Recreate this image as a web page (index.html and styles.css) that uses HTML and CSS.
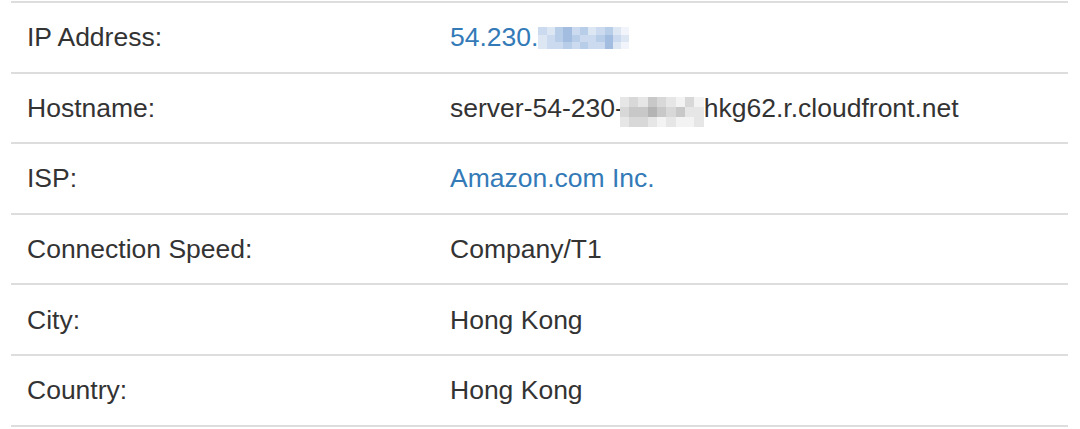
FILE: index.html
```html
<!DOCTYPE html>
<html>
<head>
<meta charset="utf-8">
<link rel="stylesheet" href="styles.css">
</head>
<body>
<div class="info-table">
  <div class="row">
    <div class="cell label">IP Address:</div>
    <div class="cell value"><a class="link" href="#">54.230.</a><span class="blur blur-blue"><i class="c2"></i><i class="c1"></i><i class="c3"></i><i class="c4"></i><i class="c2"></i><i class="c3"></i><i class="c1"></i><i class="c2"></i><i class="c3"></i><i class="c1"></i><i class="c0"></i><i class="c1"></i><i class="c2"></i><i class="c3"></i><i class="c4"></i><i class="c3"></i><i class="c2"></i><i class="c2"></i><i class="c3"></i><i class="c4"></i><i class="c2"></i><i class="c1"></i><i class="c1"></i><i class="c2"></i><i class="c2"></i><i class="c3"></i><i class="c2"></i><i class="c3"></i><i class="c2"></i><i class="c2"></i><i class="c4"></i><i class="c1"></i><i class="c0"></i></span></div>
  </div>
  <div class="row">
    <div class="cell label">Hostname:</div>
    <div class="cell value">server-54-230-<span class="blur blur-gray"><i class="g1"></i><i class="g2"></i><i class="g1"></i><i class="g3"></i><i class="g2"></i><i class="g1"></i><i class="g0"></i><i class="g2"></i><i class="g0"></i><i class="g2"></i><i class="g3"></i><i class="g3"></i><i class="g4"></i><i class="g3"></i><i class="g2"></i><i class="g3"></i><i class="g1"></i><i class="g1"></i><i class="g1"></i><i class="g2"></i><i class="g2"></i><i class="g1"></i><i class="g0"></i><i class="g1"></i><i class="g0"></i><i class="g0"></i><i class="g1"></i></span>hkg62.r.cloudfront.net</div>
  </div>
  <div class="row">
    <div class="cell label">ISP:</div>
    <div class="cell value"><a class="link" href="#">Amazon.com Inc.</a></div>
  </div>
  <div class="row">
    <div class="cell label">Connection Speed:</div>
    <div class="cell value">Company/T1</div>
  </div>
  <div class="row">
    <div class="cell label">City:</div>
    <div class="cell value">Hong Kong</div>
  </div>
  <div class="row">
    <div class="cell label">Country:</div>
    <div class="cell value">Hong Kong</div>
  </div>
</div>
</body>
</html>
```

FILE: styles.css
```css
html, body {
  margin: 0;
  padding: 0;
  background: #ffffff;
}
body {
  font-family: "Liberation Sans", Arial, Helvetica, sans-serif;
  font-size: 26.5px;
  color: #333333;
}
.info-table {
  width: 1057px;
  margin-left: 11px;
  padding-top: 1px;
  border-bottom: 2px solid #dddddd;
}
.row {
  display: grid;
  grid-template-columns: 439px 1fr;
  height: 70.6px;
  box-sizing: border-box;
  border-top: 2px solid #dddddd;
  align-items: center;
}
.cell {
  padding-left: 16px;
  white-space: nowrap;
  line-height: 30px;
}
.value {
  padding-left: 0;
  display: flex;
  align-items: center;
}
.link {
  color: #337ab7;
  text-decoration: none;
}
.blur {
  display: inline-grid;
  grid-auto-flow: row;
}
.blur i {
  display: block;
}
.blur-blue {
  width: 91px;
  height: 22px;
  grid-template-columns: repeat(11, 1fr);
  grid-template-rows: repeat(3, 1fr);
  margin-top: 2px;
}
.blur-gray {
  width: 84px;
  height: 30px;
  grid-template-columns: repeat(9, 1fr);
  grid-template-rows: repeat(3, 1fr);
  margin-top: 8px;
  margin-left: -4px;
}
.c0 { background: #f1f5fb; }
.c1 { background: #dde7f4; }
.c2 { background: #cbdaee; }
.c3 { background: #b8cde8; }
.c4 { background: #a3bde0; }
.g0 { background: #f3f3f3; }
.g1 { background: #e6e6e6; }
.g2 { background: #d8d8d8; }
.g3 { background: #c8c8c8; }
.g4 { background: #b4b4b4; }
```
